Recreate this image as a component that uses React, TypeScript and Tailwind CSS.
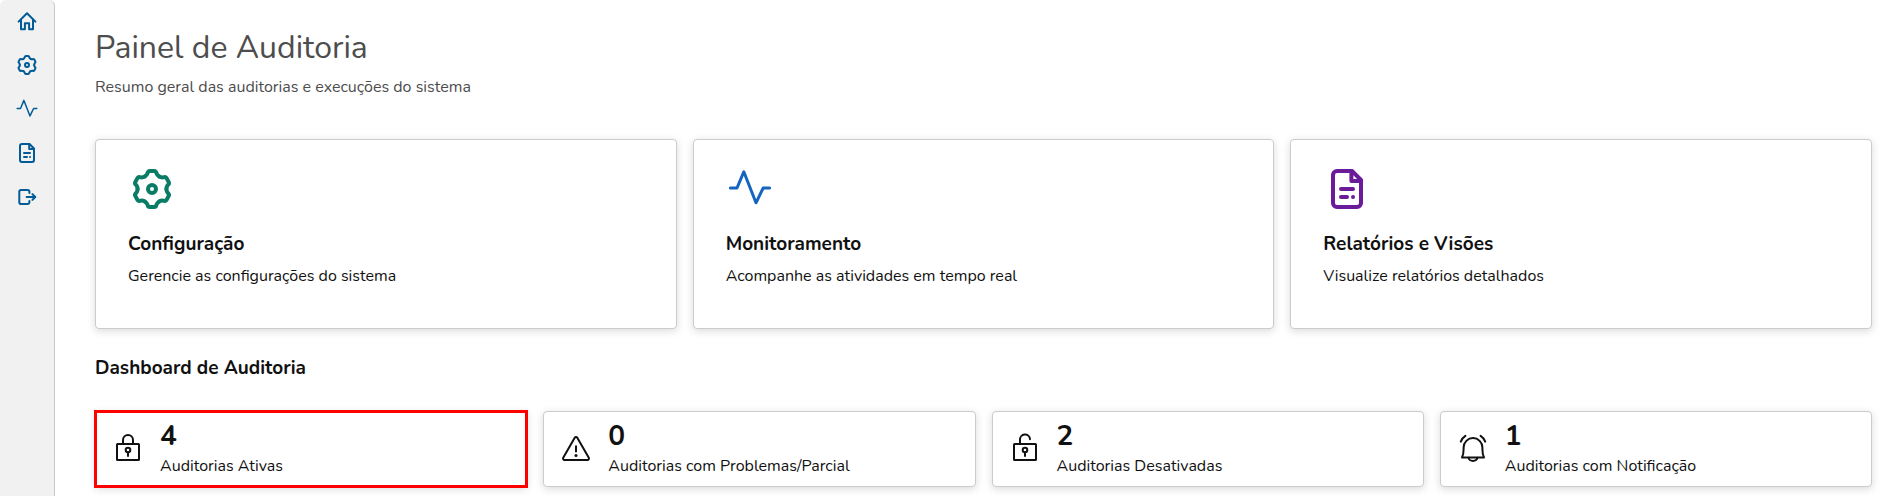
import type { ReactNode } from 'react';

type IconProps = { className?: string };

function Stroke24({ className, width = 2, children }: IconProps & { width?: number; children: ReactNode }) {
  return (
    <svg
      viewBox="0 0 24 24"
      fill="none"
      stroke="currentColor"
      strokeWidth={width}
      strokeLinecap="round"
      strokeLinejoin="round"
      aria-hidden="true"
      className={className}
    >
      {children}
    </svg>
  );
}

function Stroke32({ children }: { children: ReactNode }) {
  return (
    <svg
      viewBox="0 0 32 32"
      fill="none"
      stroke="currentColor"
      strokeWidth={2}
      strokeLinecap="round"
      strokeLinejoin="round"
      aria-hidden="true"
      className="size-8 shrink-0"
    >
      {children}
    </svg>
  );
}

function HomeIcon({ className }: IconProps) {
  return (
    <Stroke24 className={className}>
      <path d="M3.6 12.6 12 4.2l8.4 8.4" />
      <path d="M6 10.8v9.4h3.9v-5.9h4.2v5.9H18v-9.4" />
    </Stroke24>
  );
}

// One tooth, valley to valley, repeated every 60 degrees
const TOOTH = 'M-3.6-6.24Q-2.56-6.84-2.2-7.9Q-2-9-1.1-9H1.1Q2-9 2.2-7.9Q2.56-6.84 3.6-6.24';

function GearIcon({ className }: IconProps) {
  return (
    <Stroke24 className={className}>
      <g transform="translate(12 12)">
        {[0, 60, 120, 180, 240, 300].map((angle) => (
          <path key={angle} d={TOOTH} transform={`rotate(${angle})`} />
        ))}
        <circle r="2" />
      </g>
    </Stroke24>
  );
}

function PulseIcon({ className }: IconProps) {
  return (
    <Stroke24 className={className} width={1.5}>
      <path d="M2.2 11.5h3.3L8.9 3.4 15 18.9l3.6-7.4h3.2" />
    </Stroke24>
  );
}

function ReportIcon({ className }: IconProps) {
  return (
    <Stroke24 className={className}>
      <path d="M14.5 3H7a2 2 0 0 0-2 2v14a2 2 0 0 0 2 2h10a2 2 0 0 0 2-2V7.5z" />
      <path d="M14.2 3v5H19M9 12h6M9 16h3M15 16h.01" />
    </Stroke24>
  );
}

function LogoutIcon({ className }: IconProps) {
  return (
    <Stroke24 className={className}>
      <path d="M14.4 8V6.7a1.8 1.8 0 0 0-1.8-1.8H6.1a1.8 1.8 0 0 0-1.8 1.8v10.6a1.8 1.8 0 0 0 1.8 1.8h6.5a1.8 1.8 0 0 0 1.8-1.8V16" />
      <path d="M11.6 12h8.6M17.4 9.1l2.9 2.9-2.9 2.9" />
    </Stroke24>
  );
}

function LockIcon({ open = false }: { open?: boolean }) {
  return (
    <Stroke32>
      <rect x="5" y="11" width="22" height="16" rx="0.6" />
      <path d={open ? 'M11 11V7a5 5 0 0 1 10-.8' : 'M11 11V7a5 5 0 0 1 10 0v4'} />
      <circle cx="16" cy="17" r="2.3" />
      <path d="M16 19.3v3.8" />
    </Stroke32>
  );
}

function WarningIcon() {
  return (
    <Stroke32>
      <path d="M14.7 4.8a1.5 1.5 0 0 1 2.6 0l11.5 20a1.5 1.5 0 0 1-1.3 2.2h-23a1.5 1.5 0 0 1-1.3-2.2z" />
      <path d="M16 13.2v5.2" />
      <circle cx="16" cy="22.4" r="1.5" fill="currentColor" stroke="none" />
    </Stroke32>
  );
}

function BellIcon() {
  return (
    <Stroke32>
      <path d="M5 24.5c1.2-2.4 1.6-5 1.6-8.5v-1.5a9.4 9.4 0 0 1 18.8 0V16c0 3.5.4 6.1 1.6 8.5z" />
      <path d="M11.7 24.8a4.3 3.2 0 0 0 8.6 0" />
      <path d="M3.8 8.6q1.4-3.6 4.6-5.7M28.2 8.6q-1.4-3.6-4.6-5.7" />
    </Stroke32>
  );
}

const NAV = [
  { label: 'Início', Icon: HomeIcon },
  { label: 'Configuração', Icon: GearIcon },
  { label: 'Monitoramento', Icon: PulseIcon },
  { label: 'Relatórios', Icon: ReportIcon },
  { label: 'Sair', Icon: LogoutIcon },
];

const SECTIONS = [
  {
    title: 'Configuração',
    description: 'Gerencie as configurações do sistema',
    Icon: GearIcon,
    color: 'size-12 text-[#0a7c66]',
  },
  {
    title: 'Monitoramento',
    description: 'Acompanhe as atividades em tempo real',
    Icon: PulseIcon,
    color: 'size-12 text-[#1565c0]',
  },
  {
    title: 'Relatórios e Visões',
    description: 'Visualize relatórios detalhados',
    Icon: ReportIcon,
    color: 'size-12 text-[#6a1b9a]',
  },
];

const STATS = [
  { value: 4, label: 'Auditorias Ativas', icon: <LockIcon />, highlighted: true },
  { value: 0, label: 'Auditorias com Problemas/Parcial', icon: <WarningIcon /> },
  { value: 2, label: 'Auditorias Desativadas', icon: <LockIcon open /> },
  { value: 1, label: 'Auditorias com Notificação', icon: <BellIcon /> },
];

function Sidebar() {
  return (
    <nav className="flex w-[55px] shrink-0 flex-col items-center gap-5 rounded-t-md border-r border-[#c8c8c8] bg-[#f1f1f1] pt-[9px]">
      {NAV.map(({ label, Icon }) => (
        <a key={label} href="#" aria-label={label} className="text-[#005b96]">
          <Icon className="size-6" />
        </a>
      ))}
    </nav>
  );
}

export default function App() {
  return (
    <div className="flex min-h-screen bg-white font-[Nunito,'Nunito_Sans',Lato,sans-serif] text-[#111]">
      <Sidebar />
      <main className="min-w-0 flex-1 pt-[26px] pr-2 pl-10">
        <header className="text-[#4d4d4d]">
          <h1 className="text-[32px] leading-[44px] font-normal">Painel de Auditoria</h1>
          <p className="mt-[5px] leading-6">Resumo geral das auditorias e execuções do sistema</p>
        </header>

        <div className="mt-10 grid gap-4 md:grid-cols-3">
          {SECTIONS.map(({ title, description, Icon, color }) => (
            <a
              key={title}
              href="#"
              className="rounded-sm border border-[#ccc] bg-white px-8 pt-[25px] pb-10 shadow-[0_2px_8px_rgba(0,0,0,0.15)]"
            >
              <Icon className={color} />
              <h2 className="mt-[17px] text-[19px] leading-7 font-bold">{title}</h2>
              <p className="mt-1.5 leading-6">{description}</p>
            </a>
          ))}
        </div>

        <h2 className="mt-[25px] text-[19px] leading-7 font-bold">Dashboard de Auditoria</h2>

        <div className="mt-[29px] grid gap-4 md:grid-cols-4">
          {STATS.map((stat) => (
            <div
              key={stat.label}
              className={`flex items-center gap-4 border border-[#ccc] bg-white px-4 py-2 shadow-[0_2px_8px_rgba(0,0,0,0.15)] ${
                stat.highlighted ? 'outline-3 -outline-offset-2 outline-[#f00]' : 'rounded-sm'
              }`}
            >
              {stat.icon}
              <div>
                <p className="text-[28px] leading-8 font-bold">{stat.value}</p>
                <p className="mt-0.5 leading-6">{stat.label}</p>
              </div>
            </div>
          ))}
        </div>
      </main>
    </div>
  );
}
